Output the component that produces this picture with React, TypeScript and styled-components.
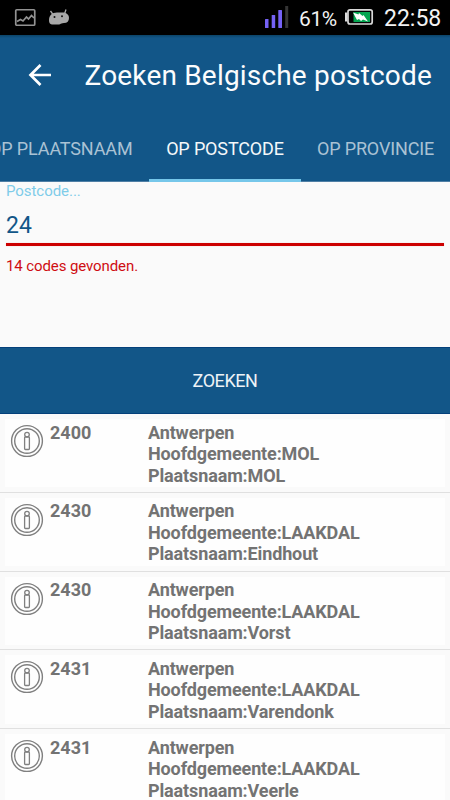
import React from "react";
import styled, { createGlobalStyle } from "styled-components";

const GlobalStyle = createGlobalStyle`
  * { box-sizing: border-box; }
  html, body { margin: 0; padding: 0; background: #fafafa; overflow: hidden; }
  body { font-family: Roboto, "Liberation Sans", sans-serif; }
`;

const Screen = styled.div`
  width: 450px;
  height: 800px;
  overflow: hidden;
  background: #fafafa;
  display: flex;
  flex-direction: column;
`;

const StatusBar = styled.header`
  height: 35px;
  flex: none;
  background: #000;
  display: flex;
  align-items: center;
  justify-content: space-between;
  padding: 0 8px 0 14px;
  color: #f2f2f2;
`;

const StatusGroup = styled.div<{ $gap?: number }>`
  display: flex;
  align-items: center;
  gap: ${(p) => p.$gap ?? 0}px;
  height: 35px;
  svg { display: block; flex: none; }
`;

const Percent = styled.span`
  font-size: 21px;
  line-height: 36px;
  width: 46px;
  padding-top: 2px;
  letter-spacing: -0.4px;
  white-space: nowrap;
`;

const Clock = styled.span`
  font-size: 23px;
  line-height: 36px;
  width: 58px;
  padding-top: 2px;
  white-space: nowrap;
`;

const AppBar = styled.div`
  height: 81px;
  flex: none;
  background: linear-gradient(#0b4468, #125688 3px);
  display: flex;
  align-items: center;
  padding-left: 28px;
`;

const BackIcon = styled.svg`
  display: block;
  flex: none;
  width: 23px;
  height: 24px;
  margin-top: -2px;
`;

const Title = styled.h1`
  margin: 0 0 0 33.5px;
  font-size: 28px;
  font-weight: 400;
  line-height: 36px;
  letter-spacing: 0.18px;
  color: #fbfcfd;
  white-space: nowrap;
`;

const Tabs = styled.nav`
  height: 66px;
  flex: none;
  background: #125688;
  border-bottom: 1px solid #4f7fa5;
  display: flex;
`;

const Tab = styled.div<{ $active?: boolean; $width: number; $align?: string }>`
  width: ${(p) => p.$width}px;
  flex: none;
  height: 66px;
  padding: 0 16.5px 1px;
  display: flex;
  align-items: center;
  justify-content: ${(p) => p.$align ?? "center"};
  font-size: 18px;
  letter-spacing: -0.14px;
  white-space: nowrap;
  color: ${(p) => (p.$active ? "#f4f8fa" : "#aac2d4")};
  box-shadow: ${(p) => (p.$active ? "inset 0 -3px #76c7ea" : "none")};
`;

const Form = styled.section`
  height: 165px;
  flex: none;
  padding: 0 6px;
  display: flex;
  flex-direction: column;
`;

const FieldLabel = styled.label`
  height: 18px;
  font-size: 15px;
  line-height: 18px;
  letter-spacing: -0.05px;
  color: #7fcce9;
`;

const FieldValue = styled.div`
  height: 43px;
  padding-top: 12px;
  font-size: 23px;
  line-height: 28px;
  color: #125688;
`;

const FieldLine = styled.div`
  height: 3px;
  background: #cc0000;
  box-shadow: 0 0 1px #e5a0a0;
`;

const FieldMessage = styled.div`
  margin-top: 10px;
  font-size: 15px;
  line-height: 20px;
  letter-spacing: -0.1px;
  color: #cf0d12;
`;

const SearchButton = styled.button`
  height: 67px;
  flex: none;
  border: 0;
  border-top: 1px solid #04407a;
  border-bottom: 1px solid #04407a;
  background: #125688;
  color: #edf3f7;
  font: 400 18px/24px Roboto, sans-serif;
  letter-spacing: -0.45px;
  padding: 0;
`;

const Results = styled.ul`
  list-style: none;
  margin: 0;
  padding: 0;
`;

const ResultRow = styled.li`
  height: 78.75px;
  padding: 5px 5px 4.5px;
  border-bottom: 1px solid #e0e0e0;
`;

const ResultCard = styled.div`
  height: 100%;
  background: #fefefe;
  display: grid;
  grid-template-columns: 45px 98px 1fr;
  font-size: 18px;
  font-weight: 700;
  line-height: 21.6px;
  color: #737373;
  white-space: nowrap;
`;

const InfoIcon = styled.svg`
  display: block;
  width: 34px;
  height: 34px;
  margin: 5px 0 0 5px;
`;

const Code = styled.div`
  padding-top: 2.5px;
`;

const Details = styled.div`
  padding-top: 2.5px;
  letter-spacing: -0.13px;
`;

const results = [
  { code: "2400", municipality: "MOL", place: "MOL" },
  { code: "2430", municipality: "LAAKDAL", place: "Eindhout" },
  { code: "2430", municipality: "LAAKDAL", place: "Vorst" },
  { code: "2431", municipality: "LAAKDAL", place: "Varendonk" },
  { code: "2431", municipality: "LAAKDAL", place: "Veerle" },
];

const PictureGlyph = () => (
  <svg width="22" height="35" viewBox="0 0 22 35" fill="none" stroke="#929292">
    <rect x="1.75" y="9.75" width="19" height="15.5" rx="1" strokeWidth="1.7" />
    <path d="M3 21.5l3.5-2 2.5 1.5 3.500-4 2 2 3-3.500 2.500 2.500" strokeWidth="1.700" />
  </svg>
);

const AndroidGlyph = () => (
  <svg width="22" height="35" viewBox="0 0 22 35">
    <path d="M2.500 11l2.500 3.500M18 9.500L16.500 14" stroke="#a8a8a8" strokeWidth="1.300" />
    <path
      d="M1 20.500C1 15.500 4 12.600 9 12.600h5.500c4.500 0 6.500 2.600 6.500 5.300 0 3-1.700 5-5 5.200l-1.500.100c-1.500.100-2 .900-3.500 1.200H4c-2 .100-3-1.600-3-3.900z"
      fill="#a8a8a8"
    />
    <circle cx="6.500" cy="17" r="1" fill="#111" />
    <circle cx="14" cy="16.200" r="1" fill="#111" />
  </svg>
);

const SignalGlyph = () => (
  <svg width="34" height="35" viewBox="0 0 34 35">
    <g fill="#7562f5">
      <rect x="0" y="19" width="3.500" height="9" rx=".5" />
      <rect x="6.700" y="15" width="3.500" height="13" rx=".5" />
      <rect x="13.300" y="10" width="3.700" height="18" rx=".5" />
    </g>
    <rect x="20.200" y="6" width="3" height="22" fill="#353535" />
  </svg>
);

const BatteryGlyph = () => (
  <svg width="39" height="35" viewBox="0 0 39 35">
    <rect x="0" y="12.500" width="2.500" height="9" fill="#ddd" />
    <rect x="3" y="9.800" width="24.200" height="14.200" rx="2" fill="#050505" stroke="#d8d8d8" strokeWidth="1.700" />
    <rect x="8.500" y="12" width="16.500" height="10" fill="#05a651" />
    <path d="M8 12.500l5.500 2 .5-1.500 3.500 3 1-1 4.500 6.500-5-2-2 1.500-2-2-2 1z" fill="#fff" />
  </svg>
);

const Info = () => (
  <InfoIcon viewBox="0 0 34 34" fill="none" stroke="#808080">
    <circle cx="17" cy="17" r="15.400" strokeWidth="1.400" />
    <circle cx="17" cy="17" r="12.300" strokeWidth="1.400" />
    <circle cx="17" cy="10.600" r="2.300" strokeWidth="1.300" />
    <rect x="14.600" y="13" width="4.800" height="12.500" rx="0.800" strokeWidth="1.300" />
  </InfoIcon>
);

export default function App() {
  return (
    <>
      <GlobalStyle />
      <Screen>
        <StatusBar>
          <StatusGroup $gap={12}>
            <PictureGlyph />
            <AndroidGlyph />
          </StatusGroup>
          <StatusGroup>
            <SignalGlyph />
            <Percent>61%</Percent>
            <BatteryGlyph />
            <Clock>22:58</Clock>
          </StatusGroup>
        </StatusBar>
        <AppBar>
          <BackIcon viewBox="0 0 23 24" fill="none" stroke="#fff" strokeWidth="2.700">
            <path d="M12.500 2L2.500 12l10 10M2 12h21" />
          </BackIcon>
          <Title>Zoeken Belgische postcode</Title>
        </AppBar>
        <Tabs>
          <Tab $width={149} $align="flex-end">OP PLAATSNAAM</Tab>
          <Tab $active $width={152}>OP POSTCODE</Tab>
          <Tab $width={149}>OP PROVINCIE</Tab>
        </Tabs>
        <Form>
          <FieldLabel>Postcode...</FieldLabel>
          <FieldValue>24</FieldValue>
          <FieldLine />
          <FieldMessage>14 codes gevonden.</FieldMessage>
        </Form>
        <SearchButton>ZOEKEN</SearchButton>
        <Results>
          {results.map((r, i) => (
            <ResultRow key={i}>
              <ResultCard>
                <Info />
                <Code>{r.code}</Code>
                <Details>
                  <div>Antwerpen</div>
                  <div>Hoofdgemeente:{r.municipality}</div>
                  <div>Plaatsnaam:{r.place}</div>
                </Details>
              </ResultCard>
            </ResultRow>
          ))}
        </Results>
      </Screen>
    </>
  );
}
